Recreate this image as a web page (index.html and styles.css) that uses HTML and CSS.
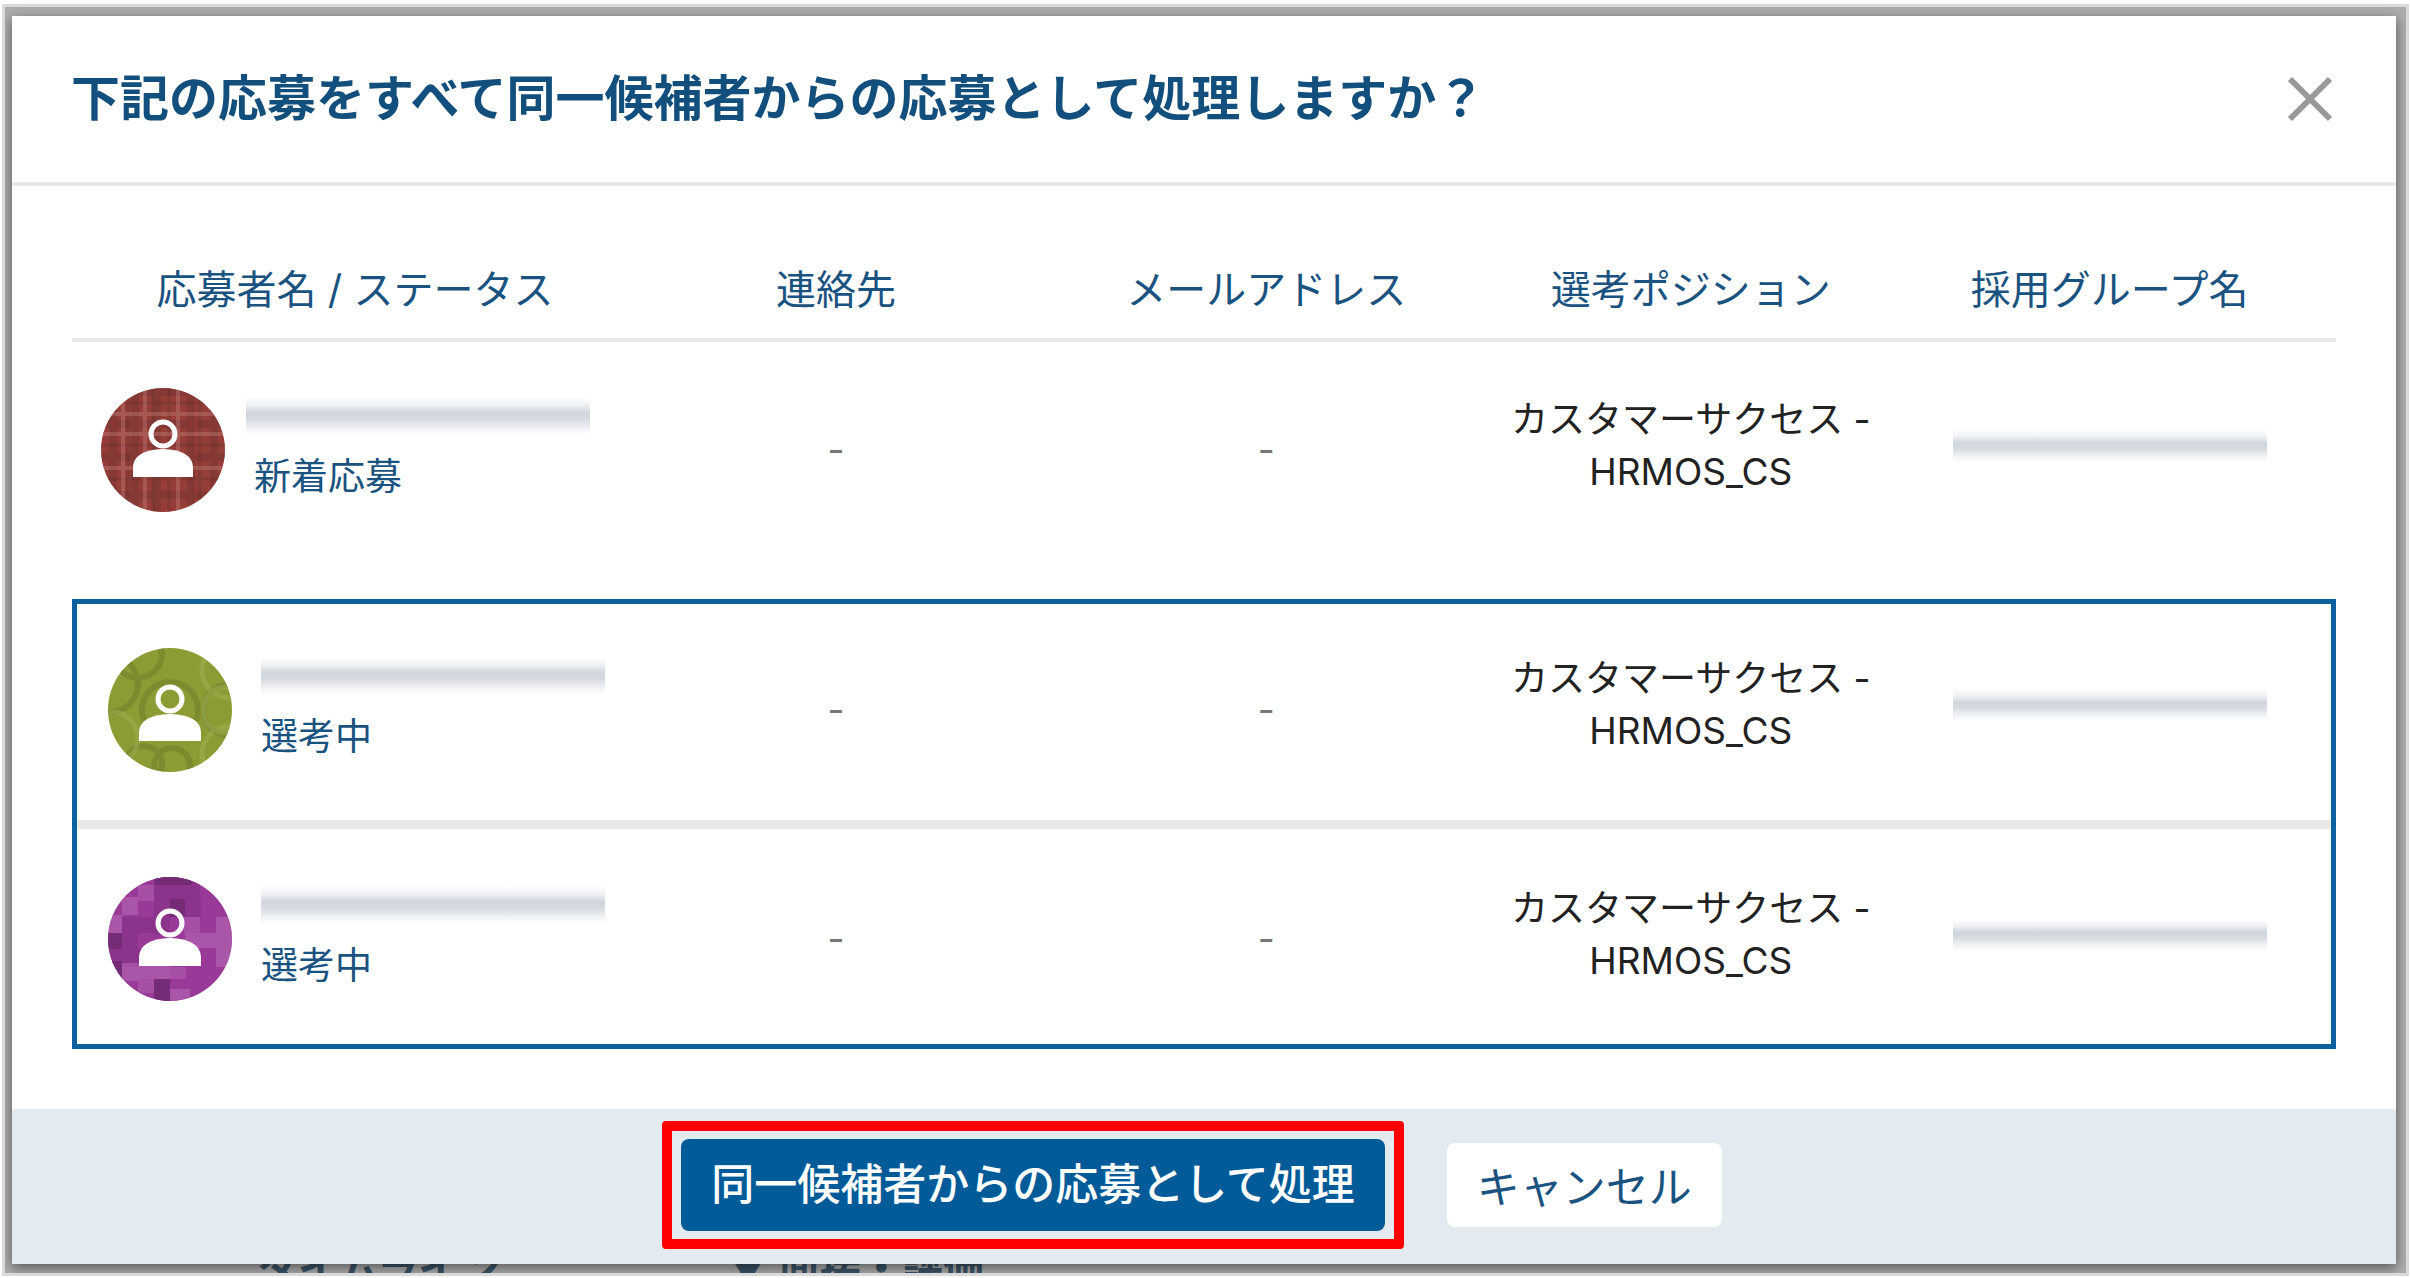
FILE: index.html
```html
<!DOCTYPE html>
<html lang="ja">
<head>
    <meta charset="UTF-8">
    <meta name="viewport" content="width=device-width, initial-scale=1.0">
    <title>同一候補者の確認</title>
    <link rel="stylesheet" href="styles.css">
</head>
<body>
    <div class="page">
        <div class="backdrop" aria-hidden="true">
            <span class="backdrop-tab">タイムライン</span>
            <span class="backdrop-tab">▼ 面接・評価</span>
        </div>
        <div class="modal" role="dialog" aria-labelledby="modal-title">
            <div class="modal-header">
                <h1 id="modal-title">下記の応募をすべて同一候補者からの応募として処理しますか？</h1>
                <button type="button" class="close" aria-label="閉じる">
                    <svg viewBox="0 0 46 46"><path d="M3 3L43 43M43 3L3 43"/></svg>
                </button>
            </div>
            <div class="modal-body">
                <table class="applicants">
                    <colgroup>
                        <col class="col-name">
                        <col class="col-contact">
                        <col class="col-mail">
                        <col class="col-position">
                        <col class="col-group">
                    </colgroup>
                    <thead>
                        <tr>
                            <th>応募者名 / ステータス</th>
                            <th>連絡先</th>
                            <th>メールアドレス</th>
                            <th>選考ポジション</th>
                            <th>採用グループ名</th>
                        </tr>
                    </thead>
                    <tbody class="single">
                        <tr>
                            <td>
                                <div class="applicant">
                                    <svg class="avatar" viewBox="0 0 124 124">
                                        <defs>
                                            <clipPath id="round"><circle cx="62" cy="62" r="62"/></clipPath>
                                        </defs>
                                        <g clip-path="url(#round)">
                                            <rect width="124" height="124" fill="#983f3a"/>
                                            <path d="M0 4H124M0 36H124M0 69H124M0 107H124M12 0V124M34 0V124M56 0V124M90 0V124M113 0V124" stroke="#5f3030" stroke-width="8" opacity=".3"/>
                                            <path d="M0 15H124M0 57H124M0 91H124M27 0V124M52 0V124M68 0V124M99 0V124" stroke="#6b3432" stroke-width="3" opacity=".45"/>
                                            <path d="M0 26H124M0 46H124M0 80H124M22 0V124M44 0V124M77 0V124" stroke="#c98a87" stroke-width="4" opacity=".35"/>
                                        </g>
                                        <circle class="head" cx="62" cy="46" r="12"/>
                                        <path class="body" d="M32 89V80Q32 62 62 61Q92 62 92 80V89Z"/>
                                    </svg>
                                    <div class="applicant-info">
                                        <span class="masked"></span>
                                        <span class="status">新着応募</span>
                                    </div>
                                </div>
                            </td>
                            <td class="none">-</td>
                            <td class="none">-</td>
                            <td class="text">カスタマーサクセス -<br>HRMOS_CS</td>
                            <td class="text"><span class="masked masked-small"></span></td>
                        </tr>
                    </tbody>
                    <tbody class="gap"><tr><td colspan="5"></td></tr></tbody>
                    <tbody class="merged">
                        <tr>
                            <td>
                                <div class="applicant">
                                    <svg class="avatar" viewBox="0 0 124 124">
                                        <g clip-path="url(#round)">
                                            <rect width="124" height="124" fill="#8d9c34"/>
                                            <g fill="none" stroke="#6d7c2c" stroke-width="6" opacity=".5">
                                                <circle cx="30" cy="6" r="24"/>
                                                <circle cx="2" cy="36" r="28"/>
                                                <circle cx="62" cy="62" r="28"/>
                                                <circle cx="120" cy="62" r="25"/>
                                                <circle cx="36" cy="116" r="18"/>
                                                <circle cx="64" cy="118" r="18"/>
                                            </g>
                                            <g fill="none" stroke="#a9b660" stroke-width="5" opacity=".4">
                                                <circle cx="4" cy="90" r="26"/>
                                                <circle cx="118" cy="62" r="23"/>
                                                <circle cx="122" cy="106" r="28"/>
                                                <circle cx="122" cy="22" r="28"/>
                                            </g>
                                        </g>
                                        <circle class="head" cx="62" cy="51" r="12"/>
                                        <path class="body" d="M31 93V84Q32 67 62 66Q92 67 93 84V93Z"/>
                                    </svg>
                                    <div class="applicant-info">
                                        <span class="masked"></span>
                                        <span class="status">選考中</span>
                                    </div>
                                </div>
                            </td>
                            <td class="none">-</td>
                            <td class="none">-</td>
                            <td class="text">カスタマーサクセス -<br>HRMOS_CS</td>
                            <td class="text"><span class="masked masked-small"></span></td>
                        </tr>
                        <tr>
                            <td>
                                <div class="applicant">
                                    <svg class="avatar" viewBox="0 0 124 124">
                                        <g clip-path="url(#round)">
                                            <rect width="124" height="124" fill="#9a3a98"/>
                                            <path d="M46 0h46v22H46zM46 22h47v18H46zM14 40h32v16H14zM14 56h16v34H14zM30 72h16v14H30zM0 72h14v18H0zM46 40h16v18H46z" fill="#8c338b"/>
                                            <path d="M46 0h38v8H46zM62 22h15v18H62zM0 56h14v16H0zM46 102h16v22H46zM0 84h14v18H0z" fill="#752c76"/>
                                            <path d="M14 20h16v18H14zM0 38h14v18H0zM77 56h47v15H77zM30 88h32v14H30zM14 86h16v18H14zM62 112h20v12H62zM108 40h16v50H108z" fill="#b467b2" opacity=".6"/>
                                            <path d="M30 8h16v16H30zM62 90h16v12H62zM30 102h16v14H30zM76 40h16v16H76z" fill="#a64fa4"/>
                                        </g>
                                        <circle class="head" cx="62" cy="46" r="12"/>
                                        <path class="body" d="M31 89V80Q32 62 62 61Q92 62 93 80V89Z"/>
                                    </svg>
                                    <div class="applicant-info">
                                        <span class="masked"></span>
                                        <span class="status">選考中</span>
                                    </div>
                                </div>
                            </td>
                            <td class="none">-</td>
                            <td class="none">-</td>
                            <td class="text">カスタマーサクセス -<br>HRMOS_CS</td>
                            <td class="text"><span class="masked masked-small"></span></td>
                        </tr>
                    </tbody>
                </table>
            </div>
            <div class="modal-footer">
                <div class="highlight">
                    <button type="button" class="btn btn-primary">同一候補者からの応募として処理</button>
                </div>
                <button type="button" class="btn btn-cancel">キャンセル</button>
            </div>
        </div>
    </div>
</body>
</html>
```
FILE: styles.css
```css
* {
    box-sizing: border-box;
}
body {
    margin: 0;
    padding: 4px 1px 2px 2px;
    background-color: #fff;
    color: #222;
    font-family: Inter, "Noto Sans CJK JP", sans-serif;
    font-size: 37px;
}
.page {
    position: relative;
    overflow: hidden;
    padding: 9px 10px 9px 7px;
    border: 3px solid #dadada;
    background-color: #adadad;
}

/* page behind the dialog */
.backdrop {
    position: absolute;
    left: 252px;
    bottom: -16px;
    display: flex;
    gap: 226px;
    color: #3c5468;
    font-size: 41px;
    font-weight: bold;
    line-height: 41px;
}

.modal {
    position: relative;
    background-color: #fff;
    box-shadow: 0 4px 12px rgba(0, 0, 0, 0.5);
}
.modal-header {
    display: flex;
    justify-content: space-between;
    align-items: center;
    padding: 47px 63px 47px 59px;
    border-bottom: 4px solid #e8e8e8;
}
.modal-header h1 {
    margin: 0;
    color: #134f7c;
    font-size: 49px;
    line-height: 72px;
    font-weight: bold;
}
.close {
    width: 46px;
    height: 46px;
    padding: 0;
    border: none;
    background: none;
    cursor: pointer;
}
.close svg {
    display: block;
    fill: none;
    stroke: #999;
    stroke-width: 6;
}
.modal-body {
    padding: 54px 60px 60px;
}

/* table */
.applicants {
    width: 100%;
    table-layout: fixed;
    border-collapse: separate;
    border-spacing: 0;
    text-align: center;
}
.col-name {
    width: 25%;
}
.col-contact {
    width: 17.5%;
}
.col-mail {
    width: 20.5%;
}
.col-position {
    width: 17%;
}
.col-group {
    width: 20%;
}
.applicants th {
    height: 102px;
    padding: 0 0 4px;
    border-bottom: 4px solid #e8e8e8;
    color: #1a5280;
    font-size: 40px;
    font-weight: normal;
}
.applicants td {
    height: 216px;
    padding: 0;
    line-height: 52px;
    white-space: nowrap;
}
.applicants .gap td {
    height: 41px;
}
.applicants .none {
    color: #777;
}
.applicants .text {
    padding-bottom: 9px;
}
.merged {
    outline: 5px solid #0d609e;
    outline-offset: -5px;
}
.merged td {
    height: 221px;
}
.merged tr + tr td {
    height: 229px;
    border-top: 9px solid #e8e8e8;
}
.applicant {
    display: flex;
    align-items: center;
    gap: 21px;
    padding-left: 29px;
}
.merged .applicant {
    gap: 29px;
    padding-left: 36px;
}
.avatar {
    width: 124px;
    height: 124px;
}
.head {
    fill: none;
    stroke: #fff;
    stroke-width: 5;
}
.body {
    fill: #fff;
}
.applicant-info {
    display: flex;
    flex-direction: column;
    gap: 16px;
    text-align: left;
}
.status {
    padding-left: 8px;
    color: #1a5280;
}
.merged .status {
    padding-left: 0;
}
.masked {
    display: block;
    width: 344px;
    height: 38px;
    background: linear-gradient(#fff, #f0f2f4 20%, #d0d6dd 42%, #d6dbe1 58%, #f0f2f4 82%, #fff);
}
.masked-small {
    width: 314px;
    height: 32px;
    margin: 0 auto;
}

/* footer */
.modal-footer {
    display: flex;
    justify-content: center;
    align-items: center;
    gap: 43px;
    padding: 12px 24px 15px 0;
    background-color: #e3ebf0;
}
.highlight {
    padding: 8px 9px;
    border: 10px solid #f00;
    border-radius: 4px;
}
.btn {
    display: block;
    height: 84px;
    padding: 0 30px 3px;
    border: none;
    border-radius: 8px;
    font-family: inherit;
    font-size: 43px;
    cursor: pointer;
}
.btn-primary {
    height: 92px;
    padding-bottom: 8px;
    background-color: #005b98;
    color: #fff;
    font-weight: 500;
}
.btn-cancel {
    background-color: #fff;
    color: #1a5280;
}
```
